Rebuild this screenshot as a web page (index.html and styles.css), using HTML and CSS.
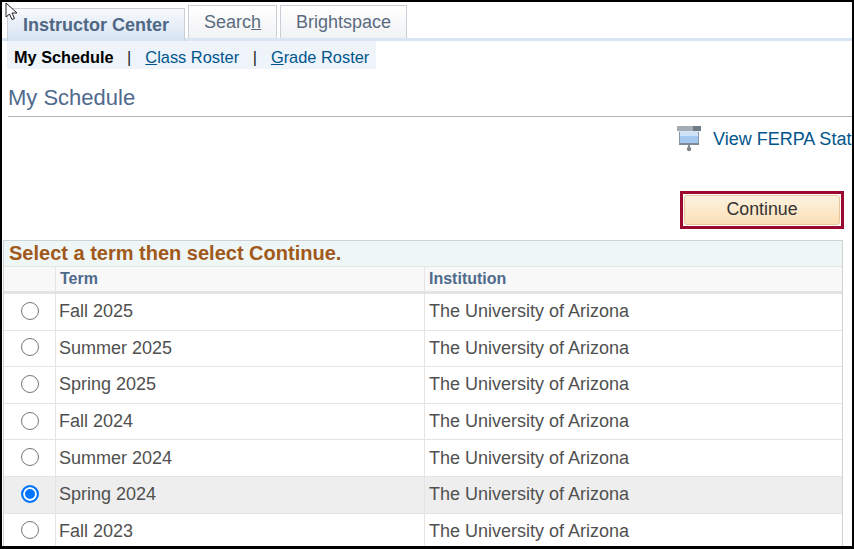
FILE: index.html
```html
<!DOCTYPE html>
<html lang="en">
<head>
    <meta charset="UTF-8">
    <title>My Schedule</title>
    <link rel="stylesheet" href="styles.css">
</head>
<body>
    <div class="frame">
        <svg class="cursor" width="14" height="19" viewBox="0 0 14 19"><path d="M1 1v14l3.500-3 2.500 5.500 2.500-1L7 11h5z" fill="#fff" stroke="#222" stroke-width="1"/></svg>
        <div class="tabs">
            <div class="tab active">Instructor Center</div>
            <div class="tab">Searc<u>h</u></div>
            <div class="tab">Brightspace</div>
        </div>
        <div class="subnav">
            <b>My Schedule</b>
            <span class="sep">|</span>
            <a href="#"><u>C</u>lass Roster</a>
            <span class="sep">|</span>
            <a href="#"><u>G</u>rade Roster</a>
        </div>
        <h1 class="page-title">My Schedule</h1>
        <div class="ferpa">
            <svg class="ferpa-icon" width="26" height="26" viewBox="0 0 26 26">
                <rect x="1" y="0" width="24" height="5" fill="#a3adb5"/>
                <rect x="17" y="0" width="8" height="5" fill="#6f7c88"/>
                <rect x="2" y="5" width="22" height="1" fill="#dfe5ea"/>
                <rect x="3" y="6" width="20" height="4" fill="#cfe3f8"/>
                <rect x="3" y="10" width="20" height="7" fill="#a3c9f0"/>
                <rect x="3" y="6" width="1" height="12" fill="#8a98a5"/>
                <rect x="22" y="6" width="1" height="12" fill="#8a98a5"/>
                <rect x="3" y="17" width="20" height="2" fill="#7f8c98"/>
                <rect x="12" y="19" width="2" height="3" fill="#8a9096"/>
                <circle cx="13" cy="23" r="2.200" fill="#7f868c"/>
            </svg>
            <a href="#">View FERPA Stat</a>
        </div>
        <div class="actions">
            <div class="focus-box"><button class="btn" type="button">Continue</button></div>
        </div>
        <div class="grid">
            <div class="grid-title">Select a term then select Continue.</div>
            <table>
                <thead>
                    <tr><th class="col-radio"></th><th class="col-term">Term</th><th>Institution</th></tr>
                </thead>
                <tbody>
                    <tr><td class="col-radio"><span class="radio"></span></td><td>Fall 2025</td><td>The University of Arizona</td></tr>
                    <tr><td class="col-radio"><span class="radio"></span></td><td>Summer 2025</td><td>The University of Arizona</td></tr>
                    <tr><td class="col-radio"><span class="radio"></span></td><td>Spring 2025</td><td>The University of Arizona</td></tr>
                    <tr><td class="col-radio"><span class="radio"></span></td><td>Fall 2024</td><td>The University of Arizona</td></tr>
                    <tr><td class="col-radio"><span class="radio"></span></td><td>Summer 2024</td><td>The University of Arizona</td></tr>
                    <tr class="selected"><td class="col-radio"><span class="radio checked"></span></td><td>Spring 2024</td><td>The University of Arizona</td></tr>
                    <tr><td class="col-radio"><span class="radio"></span></td><td>Fall 2023</td><td>The University of Arizona</td></tr>
                </tbody>
            </table>
        </div>
    </div>
</body>
</html>
```

FILE: styles.css
```css
html, body {
    margin: 0;
    height: 100%;
    overflow: hidden;
}
body {
    background-color: white;
    font-family: "Liberation Sans", Arial, sans-serif;
}
.frame {
    position: relative;
    box-sizing: border-box;
    width: 854px;
    height: 549px;
    border: 2px solid black;
    border-bottom-width: 3px;
    overflow: hidden;
}
.cursor {
    position: absolute;
    left: 3px;
    top: 0;
}
.tabs {
    display: flex;
    align-items: flex-end;
    gap: 3px;
    height: 36px;
    padding-left: 5px;
    border-bottom: 3px solid #d9e5f2;
}
.tab {
    box-sizing: border-box;
    height: 33px;
    padding: 6px 15px 0;
    border: 1px solid #c9cfd6;
    border-bottom: none;
    background: linear-gradient(#ffffff, #f1f2f4);
    color: #5a6b80;
    font-size: 18px;
}
.tab.active {
    height: 33px;
    margin-bottom: -3px;
    padding: 6px 15px 0;
    background: linear-gradient(#f7f9fc, #d6e3f2);
    color: #4f6785;
    font-weight: bold;
}
.subnav {
    display: inline-flex;
    align-items: center;
    box-sizing: border-box;
    height: 28px;
    margin-left: 5px;
    padding: 4px 7px 0 7px;
    background-color: #eef4f9;
    font-size: 16.400px;
}
.subnav b {
    color: black;
    font-size: 16.300px;
}
.subnav a {
    color: #00568c;
    text-decoration: none;
}
.sep {
    margin: 0 14px 0 13.500px;
    color: #222;
}
.page-title {
    margin: 0 0 0 6px;
    padding: 16px 0 5px;
    border-bottom: 1px solid #b5b5b5;
    color: #4f6a8c;
    font-size: 22px;
    font-weight: normal;
    line-height: 26px;
}
.ferpa {
    display: flex;
    align-items: flex-start;
    gap: 11px;
    height: 65px;
    margin-top: 9px;
    padding-left: 674px;
    white-space: nowrap;
}
.ferpa-icon {
    flex-shrink: 0;
}
.ferpa a {
    padding-top: 3px;
    color: #00568c;
    font-size: 18px;
    text-decoration: none;
}
.actions {
    display: flex;
    justify-content: flex-end;
    padding-right: 8px;
}
.focus-box {
    border: 3px solid #9b0a2e;
    padding: 1px;
}
.btn {
    display: block;
    width: 156px;
    height: 30px;
    padding: 0 0 2px;
    border: 1px solid #e6c89a;
    border-radius: 3px;
    background: linear-gradient(#fdf3e0, #fbdfb6);
    color: #333;
    font-family: inherit;
    font-size: 17.800px;
}
.grid {
    box-sizing: border-box;
    width: 840px;
    margin: 11px 0 0 1px;
    border: 1px solid #cdd3d6;
}
.grid-title {
    height: 25px;
    padding-left: 5px;
    background-color: #eff6f6;
    color: #a0591a;
    font-size: 20px;
    font-weight: bold;
    line-height: 25px;
}
table {
    width: 100%;
    border-collapse: collapse;
    table-layout: fixed;
}
th {
    height: 24px;
    padding: 0 0 0 4px;
    border-top: 1px solid #e4e4e4;
    border-left: 1px solid #e4e4e4;
    border-bottom: 3px solid #e4e4e4;
    background-color: #f8f8f8;
    color: #4f6a8c;
    font-size: 16px;
    text-align: left;
}
td {
    height: 35.600px;
    padding: 0 0 0 3px;
    border-left: 1px solid #e4e4e4;
    border-bottom: 1px solid #e4e4e4;
    color: #505050;
    font-size: 18px;
}
td:last-child {
    padding-left: 4px;
}
th:first-child, td:first-child {
    border-left: none;
}
.col-radio {
    width: 51px;
    padding: 0;
    text-align: center;
}
.col-term {
    width: 364px;
}
.selected td {
    background-color: #eeeeee;
}
.radio {
    display: block;
    box-sizing: border-box;
    width: 18px;
    height: 18px;
    margin: 0 0 2px 17px;
    border: 1.500px solid #767676;
    border-radius: 50%;
    background-color: white;
}
.radio.checked {
    border: 2px solid #0075ff;
    background-color: #0075ff;
    box-shadow: inset 0 0 0 2px white;
}
```
